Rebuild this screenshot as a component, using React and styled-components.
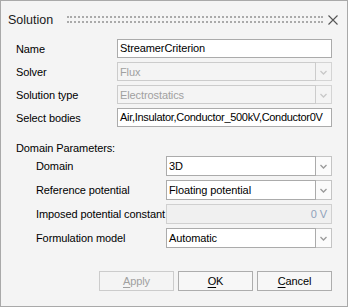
import React from "react";
import styled, { createGlobalStyle } from "styled-components";

const GlobalStyle = createGlobalStyle`
  html, body {
    margin: 0;
    padding: 0;
    background: #f4f4f4;
  }
  * {
    box-sizing: border-box;
  }
`;

const Chevron = ({ color }) => (
  <svg width="7" height="5" viewBox="0 0 7 5">
    <path d="M0.5 1 L3.5 4 L6.5 1" fill="none" stroke={color} strokeWidth="1.3" />
  </svg>
);

const Combo = ({ value, disabled }) => (
  <ComboWrap>
    <ComboField disabled={disabled}>{value}</ComboField>
    <ComboButton disabled={disabled}>
      <Chevron color={disabled ? "#c8c8c8" : "#9a9a9a"} />
    </ComboButton>
  </ComboWrap>
);

const App = () => {
  return (
    <>
      <GlobalStyle />
      <Window>
        <TitleBar>
          <Title>Solution</Title>
          <Grip />
          <Close>
            <svg width="10" height="10" viewBox="0 0 10 10">
              <path d="M0.5 0.5 L9.5 9.5 M9.5 0.5 L0.5 9.5" stroke="#555" strokeWidth="1.1" />
            </svg>
          </Close>
        </TitleBar>

        <Form>
          <Row>
            <Label>Name</Label>
            <TextBox>StreamerCriterion</TextBox>
          </Row>
          <Row>
            <Label>Solver</Label>
            <Combo value="Flux" disabled />
          </Row>
          <Row>
            <Label>Solution type</Label>
            <Combo value="Electrostatics" disabled />
          </Row>
          <Row>
            <Label>Select bodies</Label>
            <TextBox tight>Air,Insulator,Conductor_500kV,Conductor0V</TextBox>
          </Row>
        </Form>

        <Section>Domain Parameters:</Section>

        <SubForm>
          <SubRow>
            <Label>Domain</Label>
            <Combo value="3D" />
          </SubRow>
          <SubRow>
            <Label>Reference potential</Label>
            <Combo value="Floating potential" />
          </SubRow>
          <SubRow>
            <Label>Imposed potential constant</Label>
            <DisabledBox>0 V</DisabledBox>
          </SubRow>
          <SubRow>
            <Label>Formulation model</Label>
            <Combo value="Automatic" />
          </SubRow>
        </SubForm>

        <Buttons>
          <Button disabled>
            <u>A</u>pply
          </Button>
          <Button>
            <u>O</u>K
          </Button>
          <Button>
            <u>C</u>ancel
          </Button>
        </Buttons>
      </Window>
    </>
  );
};

export default App;

const Window = styled.div`
  width: 348px;
  height: 307px;
  border: 1px solid #a9a9a9;
  background: #f4f4f4;
  font-family: "Liberation Sans", Arial, sans-serif;
  font-size: 11px;
  line-height: 14px;
  letter-spacing: -0.1px;
  color: #000;
  display: flex;
  flex-direction: column;
`;

const TitleBar = styled.div`
  height: 38px;
  flex-shrink: 0;
  display: flex;
  align-items: center;
  padding: 0 9px 0 7px;
`;

const Title = styled.div`
  font-size: 12.5px;
  letter-spacing: 0;
  color: #1a1a1a;
  width: 59px;
`;

const Grip = styled.div`
  flex: 1;
  height: 7px;
  border-top: 2px dotted #aaaaaa;
  border-bottom: 2px dotted #aaaaaa;
  margin-top: -1px;
`;

const Close = styled.div`
  width: 10px;
  height: 10px;
  margin-left: 5px;
  margin-top: -1px;
  display: flex;
`;

const Form = styled.div`
  display: flex;
  flex-direction: column;
  flex-shrink: 0;
  gap: 4px;
  padding: 0 15px;
`;

const Row = styled.div`
  display: grid;
  grid-template-columns: 101px 1fr;
  align-items: center;
  height: 19px;
`;

const Label = styled.div`
  white-space: nowrap;
`;

const TextBox = styled.div`
  height: 19px;
  border: 1px solid #ababab;
  background: #fff;
  padding: 0 2px;
  line-height: 17px;
  letter-spacing: ${({ tight }) => (tight ? "-0.3px" : "-0.1px")};
  white-space: nowrap;
  overflow: hidden;
`;

const ComboWrap = styled.div`
  display: flex;
  height: 100%;
`;

const ComboField = styled.div`
  flex: 1;
  border: 1px solid ${({ disabled }) => (disabled ? "#cccccc" : "#ababab")};
  background: ${({ disabled }) => (disabled ? "#f4f4f4" : "#fff")};
  color: ${({ disabled }) => (disabled ? "#a0a0a0" : "#000")};
  padding: 0 2px;
  display: flex;
  align-items: center;
  white-space: nowrap;
`;

const ComboButton = styled.div`
  width: 16px;
  border: 1px solid ${({ disabled }) => (disabled ? "#d4d4d4" : "#c4c4c4")};
  border-left: none;
  background: ${({ disabled }) => (disabled ? "#f4f4f4" : "#fbfbfb")};
  display: flex;
  align-items: center;
  justify-content: center;
  padding-top: 1px;
`;

const Section = styled.div`
  flex-shrink: 0;
  padding: 14px 15px 0;
  height: 29px;
`;

const SubForm = styled.div`
  display: flex;
  flex-direction: column;
  flex-shrink: 0;
  gap: 4px;
  padding: 0 15px 0 35px;
`;

const SubRow = styled.div`
  display: grid;
  grid-template-columns: 130px 1fr;
  align-items: stretch;
  height: 20px;

  & > ${Label} {
    align-self: center;
  }
`;

const DisabledBox = styled.div`
  border: 1px solid #d0d0d0;
  background: #f0f0f0;
  color: #8fa1ba;
  padding: 0 4px;
  display: flex;
  align-items: center;
  justify-content: flex-end;
`;

const Buttons = styled.div`
  display: flex;
  flex-shrink: 0;
  justify-content: flex-end;
  gap: 4px;
  padding: 0 15px;
  margin-top: 23px;
`;

const Button = styled.div`
  width: 75px;
  height: 20px;
  border: 1px solid ${({ disabled }) => (disabled ? "#cccccc" : "#adadad")};
  background: ${({ disabled }) => (disabled ? "#f4f4f4" : "#f7f7f7")};
  color: ${({ disabled }) => (disabled ? "#a0a0a0" : "#000")};
  display: flex;
  align-items: center;
  justify-content: center;

  u {
    text-decoration-thickness: 1px;
    text-underline-offset: 2px;
  }
`;
